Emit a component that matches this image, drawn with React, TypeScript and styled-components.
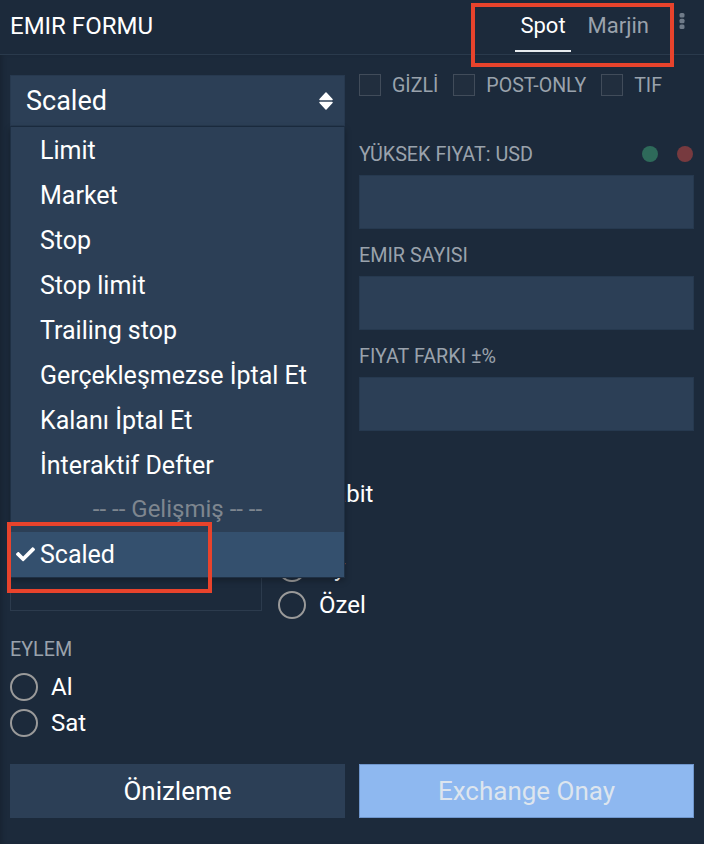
import React from 'react';
import styled, { createGlobalStyle } from 'styled-components';

const Global = createGlobalStyle`
  html, body { margin: 0; padding: 0; background: #1c2a3b; }
  body { font-family: Roboto, "Noto Sans", "Liberation Sans", sans-serif; }
  * { box-sizing: border-box; }
`;

const Page = styled.div`
  position: relative;
  width: 704px;
  height: 844px;
  overflow: hidden;
  background: #1c2a3b;
  color: #fff;
`;

const Header = styled.header`
  height: 55px;
  border-bottom: 1px solid #2a3a4c;
  display: flex;
  align-items: stretch;
  padding: 0 10px;
`;

const Title = styled.h1`
  margin: 0;
  flex: 1;
  align-self: center;
  font-size: 24px;
  font-weight: 400;
  color: #fff;
  padding-bottom: 2px;
`;

const Tabs = styled.nav`
  display: flex;
  align-items: stretch;
  gap: 12px;
  margin-right: 25px;
`;

const Tab = styled.div<{ $active?: boolean }>`
  position: relative;
  display: flex;
  align-items: center;
  padding: 0 5px 4px;
  font-size: 22px;
  color: ${(p) => (p.$active ? '#ffffff' : '#9aa2ac')};
  &::after {
    content: '';
    display: ${(p) => (p.$active ? 'block' : 'none')};
    position: absolute;
    left: 0;
    right: 0;
    bottom: 2px;
    height: 2px;
    background: #e6eaee;
  }
`;

const Kebab = styled.div`
  display: flex;
  align-items: flex-start;
  padding-top: 13px;
  margin-right: 9px;
`;

const Body = styled.main`
  padding: 20px 10px 0;
  box-shadow: inset 4px 0 5px -2px rgba(0, 0, 0, 0.18);
  height: 789px;
`;

const Columns = styled.div`
  display: grid;
  grid-template-columns: 335px 335px;
  column-gap: 14px;
`;

const Col = styled.div`
  display: flex;
  flex-direction: column;
`;

const SelectWrap = styled.div`
  position: relative;
  z-index: 5;
`;

const SelectBox = styled.div`
  height: 51px;
  background: #2c3f56;
  border: 1px solid #27394f;
  display: flex;
  align-items: center;
  justify-content: space-between;
  padding: 0 11px 0 15px;
  font-size: 27px;
  color: #fff;
`;

const Menu = styled.ul`
  position: absolute;
  left: 0;
  right: 0;
  top: 100%;
  margin: 0;
  padding: 1px 0 0;
  list-style: none;
  background: #2c3f56;
  border: 1px solid #1f3044;
  border-top-color: #1a2a3d;
  box-shadow: 0 3px 6px rgba(0, 0, 0, 0.25);
`;

const MenuItem = styled.li<{ $selected?: boolean }>`
  position: relative;
  height: 45px;
  display: flex;
  align-items: center;
  padding-left: 29px;
  font-size: 25px;
  color: #fff;
  background: ${(p) => (p.$selected ? '#34506e' : 'transparent')};
`;

const MenuGroup = styled.li`
  height: 44px;
  display: flex;
  align-items: center;
  justify-content: center;
  font-size: 24px;
  color: #7e868f;
  padding-bottom: 2px;
`;

const CheckMark = styled.span`
  position: absolute;
  left: 5px;
  top: 15px;
  display: flex;
`;

const CheckRow = styled.div`
  display: flex;
  align-items: center;
  height: 22px;
  margin-top: -1px;
`;

const CheckOption = styled.label`
  display: flex;
  align-items: center;
  margin-right: 15px;
  font-size: 19.6px;
  color: #9aa2ac;
`;

const Box = styled.span`
  width: 22px;
  height: 22px;
  border: 1px solid #414c5a;
  background: #212e3e;
  margin-right: 11px;
`;

const FieldLabel = styled.div<{ $first?: boolean }>`
  height: 20px;
  display: flex;
  align-items: center;
  justify-content: space-between;
  margin: ${(p) => (p.$first ? '48px' : '16px')} 0 11px;
  font-size: 19.75px;
  color: #9aa2ac;
  white-space: nowrap;
`;

const Dots = styled.div`
  display: flex;
  gap: 19px;
  margin-right: 1px;
`;

const Dot = styled.span<{ $color: string }>`
  width: 16px;
  height: 16px;
  border-radius: 50%;
  background: ${(p) => p.$color};
`;

const Input = styled.div<{ $muted?: boolean }>`
  height: 54px;
  background: ${(p) => (p.$muted ? 'transparent' : '#2c3f56')};
  border: 1px solid ${(p) => (p.$muted ? '#2c3b4d' : '#26394f')};
`;

const LowerRow = styled.div`
  display: grid;
  grid-template-columns: 252px 1fr;
  column-gap: 16px;
  align-items: end;
  margin-top: 49px;
`;

const LowerInput = styled(Input)`
  height: 52px;
  margin-bottom: 8px;
`;

const RadioList = styled.div<{ $gap: number }>`
  display: flex;
  flex-direction: column;
  gap: ${(p) => p.$gap}px;
`;

const RadioOption = styled.label`
  display: flex;
  align-items: center;
  height: 28px;
  font-size: 24px;
  color: #fff;
`;

const Circle = styled.span`
  width: 28px;
  height: 28px;
  border-radius: 50%;
  border: 2px solid #9a9a9a;
  margin-right: 13px;
`;

const SectionLabel = styled.div`
  height: 20px;
  display: flex;
  align-items: center;
  margin: 20px 0 14px;
  font-size: 19.75px;
  color: #9aa2ac;
`;

const Buttons = styled.div`
  display: grid;
  grid-template-columns: 335px 335px;
  column-gap: 14px;
  margin-top: 27px;
`;

const Button = styled.button<{ $primary?: boolean }>`
  height: 54px;
  border: 1px solid ${(p) => (p.$primary ? '#6f96cc' : '#2c3f56')};
  background: ${(p) => (p.$primary ? '#8eb8f0' : '#2c3f56')};
  color: ${(p) => (p.$primary ? '#dde5ee' : '#ffffff')};
  font-family: Roboto, "Noto Sans", sans-serif;
  font-size: 26px;
  padding: 0;
`;

const Annotation = styled.div`
  position: absolute;
  border: 4px solid #e8432c;
  pointer-events: none;
  z-index: 10;
`;

const SortIcon = () => (
  <svg width="14" height="18" viewBox="0 0 14 18">
    <path d="M7 1 L13 7.5 L1 7.5 Z" fill="#fff" stroke="#fff" strokeWidth="1.5" strokeLinejoin="round" />
    <path d="M7 17 L13 10.5 L1 10.5 Z" fill="#fff" stroke="#fff" strokeWidth="1.5" strokeLinejoin="round" />
  </svg>
);

const CheckIcon = () => (
  <svg width="19" height="15" viewBox="0 72 512 380">
    <path
      fill="#fff"
      d="M173.898 439.404l-166.4-166.4c-9.997-9.997-9.997-26.206 0-36.204l36.203-36.204c9.997-9.998 26.207-9.998 36.204 0L192 312.69 432.095 72.596c9.997-9.997 26.207-9.997 36.204 0l36.203 36.204c9.997 9.997 9.997 26.206 0 36.204l-294.4 294.401c-9.998 9.997-26.207 9.997-36.204-.001z"
    />
  </svg>
);

const KebabIcon = () => (
  <svg width="6" height="16" viewBox="0 0 6 16">
    <rect x="0.5" y="0" width="5" height="4.5" rx="1.5" fill="#6f7b89" />
    <rect x="0.5" y="5.7" width="5" height="4.5" rx="1.5" fill="#6f7b89" />
    <rect x="0.5" y="11.4" width="5" height="4.5" rx="1.5" fill="#6f7b89" />
  </svg>
);

const orderTypes = [
  'Limit',
  'Market',
  'Stop',
  'Stop limit',
  'Trailing stop',
  'Gerçekleşmezse İptal Et',
  'Kalanı İptal Et',
  'İnteraktif Defter',
];

export default function App() {
  return (
    <Page>
      <Global />
      <Header>
        <Title>EMIR FORMU</Title>
        <Tabs>
          <Tab $active>Spot</Tab>
          <Tab>Marjin</Tab>
        </Tabs>
        <Kebab>
          <KebabIcon />
        </Kebab>
      </Header>
      <Body>
        <Columns>
          <Col>
            <SelectWrap>
              <SelectBox>
                <span>Scaled</span>
                <SortIcon />
              </SelectBox>
              <Menu>
                {orderTypes.map((t) => (
                  <MenuItem key={t}>{t}</MenuItem>
                ))}
                <MenuGroup>-- -- Gelişmiş -- --</MenuGroup>
                <MenuItem $selected>
                  <CheckMark>
                    <CheckIcon />
                  </CheckMark>
                  Scaled
                </MenuItem>
              </Menu>
            </SelectWrap>
          </Col>
          <Col>
            <CheckRow>
              <CheckOption>
                <Box />
                GİZLİ
              </CheckOption>
              <CheckOption>
                <Box />
                POST-ONLY
              </CheckOption>
              <CheckOption>
                <Box />
                TIF
              </CheckOption>
            </CheckRow>
            <FieldLabel $first>
              <span>YÜKSEK FIYAT: USD</span>
              <Dots>
                <Dot $color="#2e6a5a" />
                <Dot $color="#773a3f" />
              </Dots>
            </FieldLabel>
            <Input />
            <FieldLabel>EMIR SAYISI</FieldLabel>
            <Input />
            <FieldLabel>FIYAT FARKI ±%</FieldLabel>
            <Input />
          </Col>
        </Columns>
        <LowerRow>
          <LowerInput $muted />
          <RadioList $gap={9}>
            <RadioOption>
              <Circle />
              Sabit
            </RadioOption>
            <RadioOption>
              <Circle />
              Ar
            </RadioOption>
            <RadioOption>
              <Circle />
              Ay
            </RadioOption>
            <RadioOption>
              <Circle />
              Özel
            </RadioOption>
          </RadioList>
        </LowerRow>
        <SectionLabel>EYLEM</SectionLabel>
        <RadioList $gap={8}>
          <RadioOption>
            <Circle />
            Al
          </RadioOption>
          <RadioOption>
            <Circle />
            Sat
          </RadioOption>
        </RadioList>
        <Buttons>
          <Button>Önizleme</Button>
          <Button $primary>Exchange Onay</Button>
        </Buttons>
      </Body>
      <Annotation style={{ left: 471, top: 3, width: 203, height: 64 }} />
      <Annotation style={{ left: 7, top: 522, width: 205, height: 71 }} />
    </Page>
  );
}
